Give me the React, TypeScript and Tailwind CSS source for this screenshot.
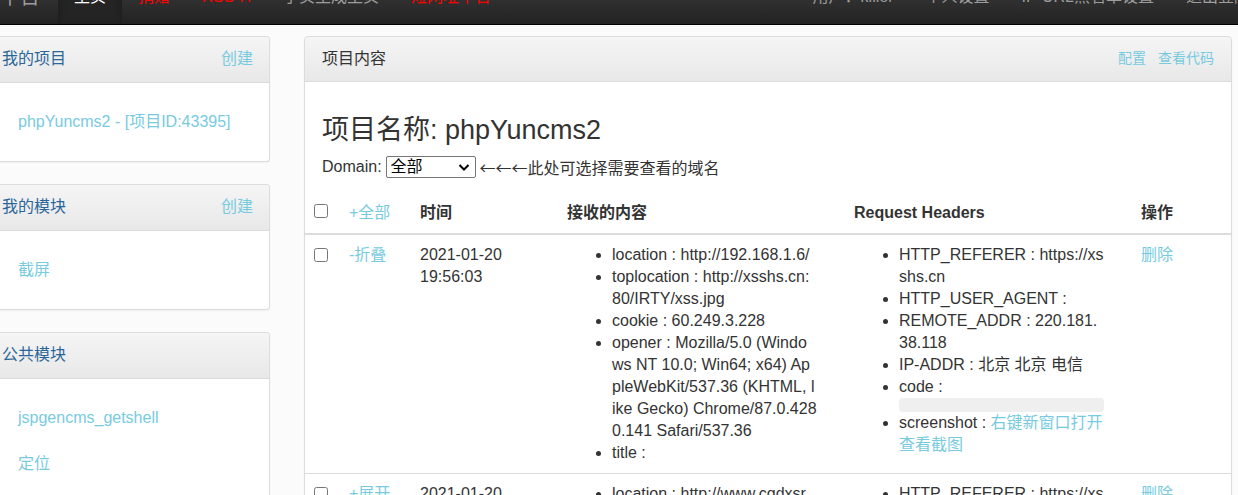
import React from "react";

type Item = { label: string; value?: React.ReactNode };

const link = "text-[#78cbdf] hover:underline";

function NavLink({ children, className }: { children: React.ReactNode; className: string }) {
  return (
    <a href="#" className={`shrink-0 whitespace-nowrap px-4 pb-4 ${className}`}>
      {children}
    </a>
  );
}

function SideCard({ title, create, items }: { title: string; create?: boolean; items: string[] }) {
  return (
    <section className="rounded-r border border-l-0 border-[#dcdcdc] bg-white shadow-xs">
      <header className="flex justify-between rounded-tr border-b border-[#dcdcdc] bg-linear-to-b from-[#f5f5f5] to-[#e8e8e8] pt-[11px] pr-4 pb-3 pl-[2px]">
        <h2 className="text-[#2b669a]">{title}</h2>
        {create && <a href="#" className={link}>创建</a>}
      </header>
      <ul className="flex flex-col gap-6 px-[18px] py-7">
        {items.map((t) => (
          <li key={t}><a href="#" className={link}>{t}</a></li>
        ))}
      </ul>
    </section>
  );
}

function Fields({ items }: { items: Item[] }) {
  return (
    <ul className="mb-[9px] ml-[45px] w-[205px] list-disc break-all">
      {items.map((i) => (
        <li key={i.label}>{i.label} : {i.value}</li>
      ))}
    </ul>
  );
}

function Row({ toggle, content, headers }: { toggle: string; content: Item[]; headers: Item[] }) {
  return (
    <tr className="border-t border-[#dcdcdc] align-top">
      <td className="p-[9px]"><input type="checkbox" aria-label="选择" className="mt-1 block size-[14px]" /></td>
      <td className="p-[9px]"><a href="#" className={link}>{toggle}</a></td>
      <td className="p-[9px]">2021-01-20<br />19:56:03</td>
      <td className="px-[9px] pt-[9px]"><Fields items={content} /></td>
      <td className="px-[9px] pt-[9px]"><Fields items={headers} /></td>
      <td className="p-[9px]"><a href="#" className={link}>删除</a></td>
    </tr>
  );
}

export default function App() {
  return (
    <div className="h-screen overflow-hidden bg-[#fbfbfb] font-['Liberation_Sans','Noto_Sans_CJK_SC',sans-serif] text-base leading-[22px] text-[#333]">
      <nav className="flex h-[25px] items-end justify-between overflow-hidden border-b border-black bg-linear-to-b from-[#303030] to-[#222] text-[#9d9d9d]">
        <div className="flex items-end">
          <a href="#" className="w-[58px] shrink-0 pb-4 text-xl leading-[22px]">平台</a>
          <NavLink className="bg-[#242424] pt-6 text-white shadow-[inset_0_3px_9px_rgba(0,0,0,0.25)]">主页</NavLink>
          <NavLink className="text-[#f00]">捐赠</NavLink>
          <NavLink className="text-[#f00]">XSS-H</NavLink>
          <NavLink className="">子页生成主页</NavLink>
          <NavLink className="text-[#f00]">短网址平台</NavLink>
        </div>
        <div className="-mr-7 flex items-end">
          <NavLink className="">用户：killer</NavLink>
          <NavLink className="">个人设置</NavLink>
          <NavLink className="">IP-URL黑名单设置</NavLink>
          <NavLink className="">退出登陆</NavLink>
        </div>
      </nav>
      <div className="flex items-start gap-[34px] pt-[11px] pr-[6px]">
        <aside className="flex w-[270px] shrink-0 flex-col gap-[22px]">
          <SideCard title="我的项目" create items={["phpYuncms2 - [项目ID:43395]"]} />
          <SideCard title="我的模块" create items={["截屏"]} />
          <SideCard title="公共模块" items={["jspgencms_getshell", "定位"]} />
        </aside>
        <main className="min-w-0 flex-1 rounded border border-[#dcdcdc] bg-white shadow-xs">
          <header className="flex justify-between rounded-t border-b border-[#dcdcdc] bg-linear-to-b from-[#f5f5f5] to-[#e8e8e8] px-[17px] py-[11px]">
            <h2>项目内容</h2>
            <div className="flex gap-3 text-sm leading-5">
              <a href="#" className={link}>配置</a>
              <a href="#" className={link}>查看代码</a>
            </div>
          </header>
          <div className="px-[17px] pt-8">
            <h1 className="mb-[10px] text-[27px] leading-8">项目名称: phpYuncms2</h1>
            <div className="flex items-center gap-1">
              <label htmlFor="domain">Domain:</label>
              <div className="relative">
                <select id="domain" className="block h-[22px] w-[90px] appearance-none rounded-xs border border-[#767676] bg-white pl-1 leading-5 text-black">
                  <option>全部</option>
                </select>
                <svg className="pointer-events-none absolute top-2 right-[6px] h-[7px] w-3" viewBox="0 0 12 7" fill="none" stroke="#000" strokeWidth="2" aria-hidden="true">
                  <path d="M1.5 1 6 5.5 10.5 1" />
                </svg>
              </div>
              <span className="font-['Noto_Sans_CJK_SC',sans-serif]">←←←此处可选择需要查看的域名</span>
            </div>
          </div>
          <table className="mt-[15px] w-full table-fixed border-collapse">
            <colgroup>
              <col className="w-[35px]" />
              <col className="w-[71px]" />
              <col className="w-[147px]" />
              <col className="w-[287px]" />
              <col className="w-[287px]" />
              <col />
            </colgroup>
            <thead>
              <tr className="border-b-2 border-[#dcdcdc] text-left">
                <th className="p-[9px]"><input type="checkbox" aria-label="全选" className="mb-1 block size-[14px]" /></th>
                <th className="p-[9px] font-normal"><a href="#" className={link}>+全部</a></th>
                <th className="p-[9px]">时间</th>
                <th className="p-[9px]">接收的内容</th>
                <th className="p-[9px]">Request Headers</th>
                <th className="p-[9px]">操作</th>
              </tr>
            </thead>
            <tbody>
              <Row
                toggle="-折叠"
                content={[
                  { label: "location", value: "http://192.168.1.6/" },
                  { label: "toplocation", value: "http://xsshs.cn:80/IRTY/xss.jpg" },
                  { label: "cookie", value: "60.249.3.228" },
                  { label: "opener", value: "Mozilla/5.0 (Windows NT 10.0; Win64; x64) AppleWebKit/537.36 (KHTML, like Gecko) Chrome/87.0.4280.141 Safari/537.36" },
                  { label: "title" },
                ]}
                headers={[
                  { label: "HTTP_REFERER", value: "https://xsshs.cn" },
                  { label: "HTTP_USER_AGENT" },
                  { label: "REMOTE_ADDR", value: "220.181.38.118" },
                  { label: "IP-ADDR", value: "北京 北京 电信" },
                  { label: "code", value: <span className="block h-[14px] rounded bg-[#efefef]" /> },
                  { label: "screenshot", value: <a href="#" className={link}>右键新窗口打开查看截图</a> },
                ]}
              />
              <Row
                toggle="+展开"
                content={[{ label: "location", value: "http://www.cqdxsr" }]}
                headers={[{ label: "HTTP_REFERER", value: "https://xs" }]}
              />
            </tbody>
          </table>
        </main>
      </div>
    </div>
  );
}
